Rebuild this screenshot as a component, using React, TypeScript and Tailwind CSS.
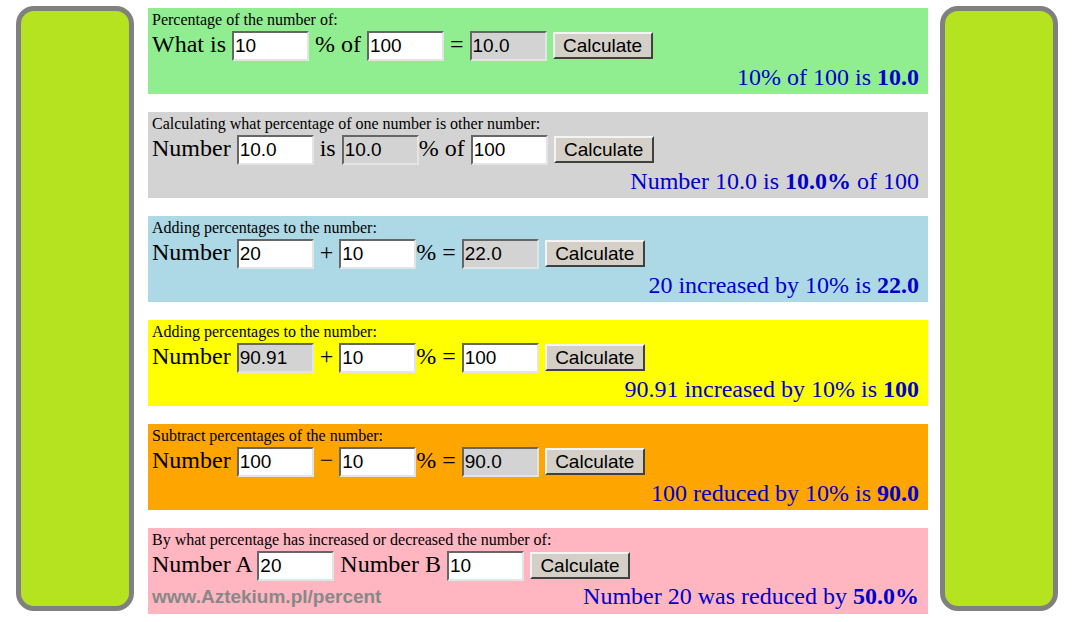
import type { ReactNode } from 'react';

const serif = "font-['Liberation_Serif','Times_New_Roman',serif]";
const sans = "font-['Liberation_Sans',Arial,sans-serif]";

function Field({ value, readOnly }: { value: string; readOnly?: boolean }) {
  return (
    <input
      type="text"
      defaultValue={value}
      readOnly={readOnly}
      className={`${sans} inline-block w-[77px] h-[30px] align-baseline border-2 border-t-[#666] border-l-[#666] border-b-[#e4e4e4] border-r-[#e4e4e4] pl-[1px] text-[19px] text-black outline-none ${
        readOnly ? 'bg-[#d3d3d3]' : 'bg-white'
      }`}
    />
  );
}

function CalcButton() {
  return (
    <button
      type="button"
      className={`${sans} inline-block w-[100px] h-[27px] align-baseline bg-[#d4d0c8] border-2 border-t-[#f4f4f4] border-l-[#f4f4f4] border-b-[#404040] border-r-[#404040] text-[19px] leading-[21px] text-black`}
    >
      Calculate
    </button>
  );
}

function Section({
  bg,
  title,
  children,
  result,
  footer,
}: {
  bg: string;
  title: string;
  children: ReactNode;
  result: ReactNode;
  footer?: boolean;
}) {
  return (
    <div className={`${bg} h-[86px] pl-[4px] pr-[9px] pt-[3px] ${serif} text-black`}>
      <div className="text-[16px] leading-[18px] h-[18px] whitespace-nowrap">{title}</div>
      <div className="text-[24px] leading-[30px] h-[30px] whitespace-nowrap">{children}</div>
      <div className={`flex items-end justify-between ${footer ? 'mt-[3px]' : 'mt-[4px]'}`}>
        {footer ? (
          <span className={`${sans} font-bold text-[19px] leading-[26px] text-[#888888]`}>
            www.Aztekium.pl/percent
          </span>
        ) : (
          <span />
        )}
        <span className="text-[24px] leading-[28px] text-[#0000cc] whitespace-nowrap">{result}</span>
      </div>
    </div>
  );
}

function SidePanel() {
  return (
    <div className="w-[118px] h-[605px] shrink-0 rounded-[18px] border-[5px] border-[#808080] bg-[#b5e31f]" />
  );
}

export default function App() {
  return (
    <div className="w-[1072px] h-[622px] bg-white flex items-start pt-[6px] overflow-hidden">
      <div className="ml-[16px]">
        <SidePanel />
      </div>

      <div className="ml-[14px] w-[780px] pt-[2px] flex flex-col gap-[18px]">
        <Section
          bg="bg-[#90ee90]"
          title="Percentage of the number of:"
          result={
            <>
              10% of 100 is <b>10.0</b>
            </>
          }
        >
          {'What is '}
          <Field value="10" />
          {' % of '}
          <Field value="100" />
          {' = '}
          <Field value="10.0" readOnly />{' '}
          <CalcButton />
        </Section>

        <Section
          bg="bg-[#d3d3d3]"
          title="Calculating what percentage of one number is other number:"
          result={
            <>
              Number 10.0 is <b>10.0%</b> of 100
            </>
          }
        >
          {'Number '}
          <Field value="10.0" />
          {' is '}
          <Field value="10.0" readOnly />
          {'% of '}
          <Field value="100" />{' '}
          <CalcButton />
        </Section>

        <Section
          bg="bg-[#add8e6]"
          title="Adding percentages to the number:"
          result={
            <>
              20 increased by 10% is <b>22.0</b>
            </>
          }
        >
          {'Number '}
          <Field value="20" />
          {' + '}
          <Field value="10" />
          {'% = '}
          <Field value="22.0" readOnly />{' '}
          <CalcButton />
        </Section>

        <Section
          bg="bg-[#ffff00]"
          title="Adding percentages to the number:"
          result={
            <>
              90.91 increased by 10% is <b>100</b>
            </>
          }
        >
          {'Number '}
          <Field value="90.91" readOnly />
          {' + '}
          <Field value="10" />
          {'% = '}
          <Field value="100" />{' '}
          <CalcButton />
        </Section>

        <Section
          bg="bg-[#ffa500]"
          title="Subtract percentages of the number:"
          result={
            <>
              100 reduced by 10% is <b>90.0</b>
            </>
          }
        >
          {'Number '}
          <Field value="100" />
          {' \u2212 '}
          <Field value="10" />
          {'% = '}
          <Field value="90.0" readOnly />{' '}
          <CalcButton />
        </Section>

        <Section
          bg="bg-[#ffb6c1]"
          title="By what percentage has increased or decreased the number of:"
          footer
          result={
            <>
              Number 20 was reduced by <b>50.0%</b>
            </>
          }
        >
          {'Number A '}
          <Field value="20" />
          {' Number B '}
          <Field value="10" />{' '}
          <CalcButton />
        </Section>
      </div>

      <div className="ml-[12px]">
        <SidePanel />
      </div>
    </div>
  );
}
